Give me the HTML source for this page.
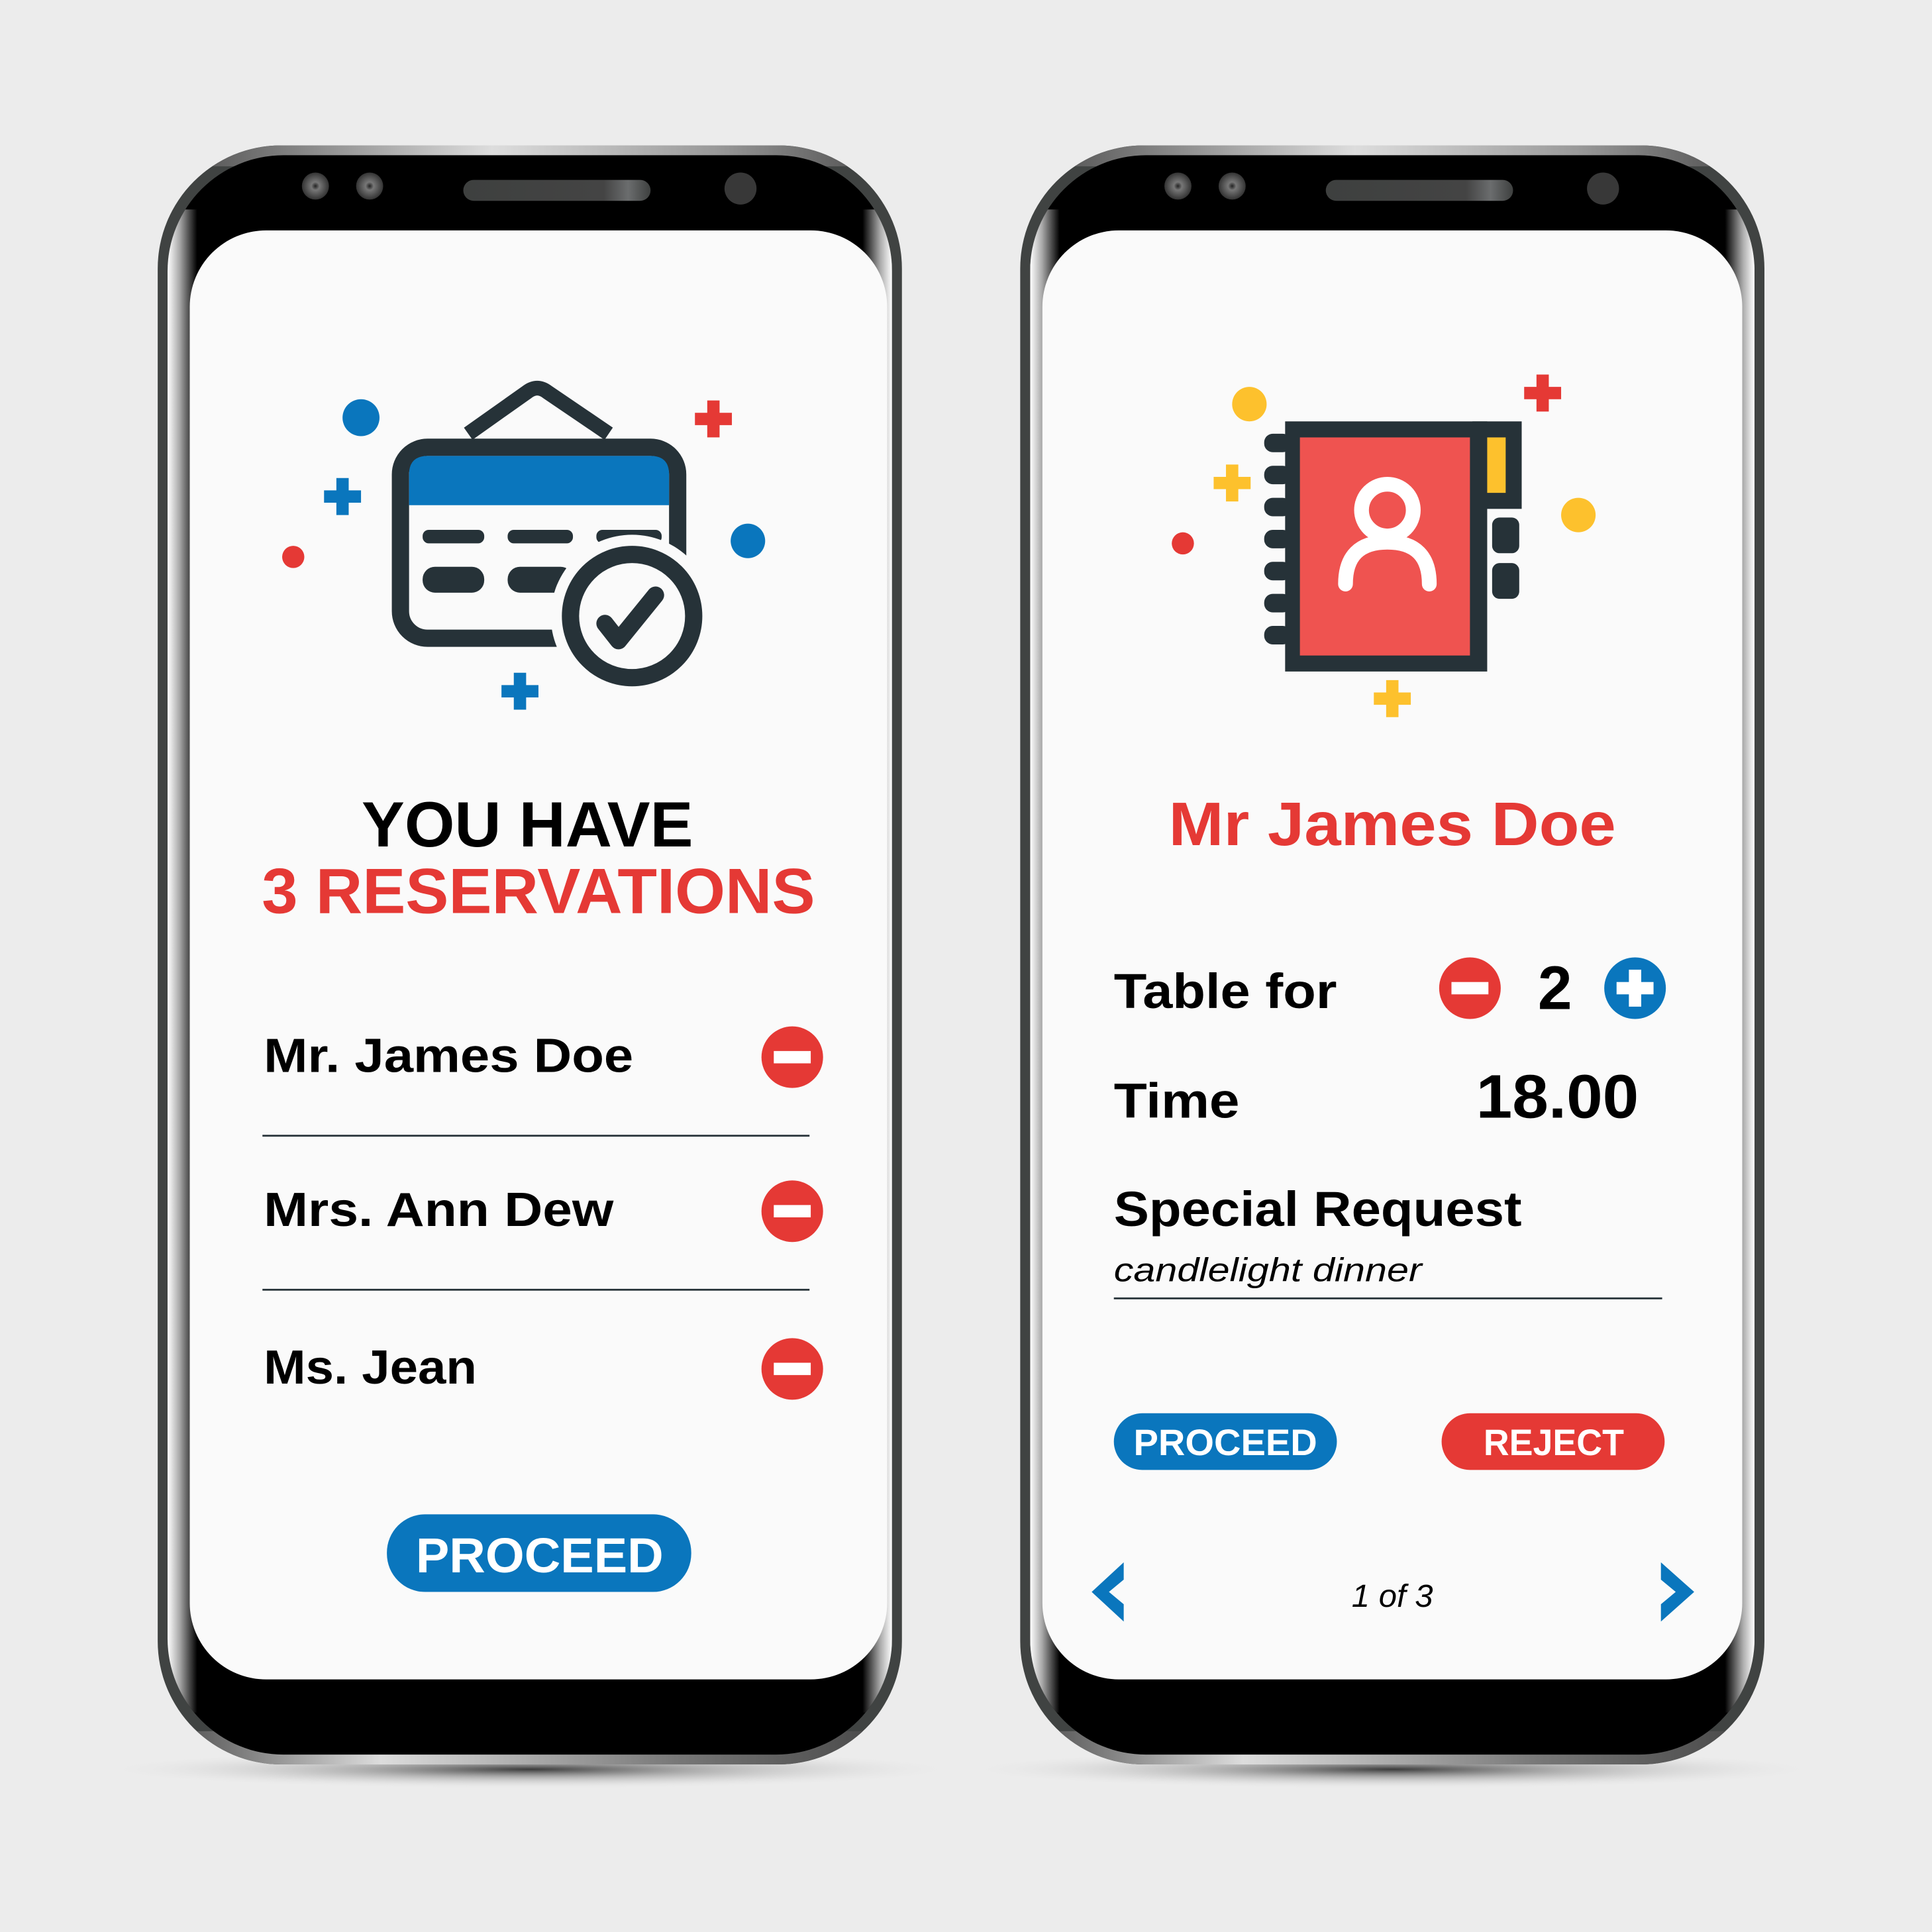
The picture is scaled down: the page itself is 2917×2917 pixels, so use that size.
<!DOCTYPE html>
<html><head><meta charset="utf-8"><style>
html,body{margin:0;padding:0;background:#ececec;}
svg{display:block;}
text{font-family:"Liberation Sans",sans-serif;}
</style></head><body>
<svg width="2917" height="2917" viewBox="0 0 1568 1568" xmlns="http://www.w3.org/2000/svg">
<defs>
<linearGradient id="bottomEdge" x1="0" x2="1" y1="0" y2="0">
<stop offset="0" stop-color="#444"/><stop offset="0.3" stop-color="#ddd"/><stop offset="0.7" stop-color="#777"/><stop offset="1" stop-color="#444"/></linearGradient>
<linearGradient id="topEdge" x1="0" x2="1" y1="0" y2="0">
<stop offset="0" stop-color="#444"/><stop offset="0.45" stop-color="#ddd"/><stop offset="0.75" stop-color="#999"/><stop offset="1" stop-color="#444"/></linearGradient>
<linearGradient id="sideL" x1="0" x2="1"><stop offset="0" stop-color="#fff"/><stop offset="0.4" stop-color="#aaa"/><stop offset="1" stop-color="#000"/></linearGradient>
<linearGradient id="sideR" x1="1" x2="0"><stop offset="0" stop-color="#fff"/><stop offset="0.4" stop-color="#aaa"/><stop offset="1" stop-color="#000"/></linearGradient>
<linearGradient id="spk" x1="0" x2="1"><stop offset="0" stop-color="#3e403f"/><stop offset="0.75" stop-color="#444"/><stop offset="0.88" stop-color="#6b6d6e"/><stop offset="1" stop-color="#3e403f"/></linearGradient>
<radialGradient id="shadow" cx="0.5" cy="0.5" r="0.5"><stop offset="0" stop-color="#000" stop-opacity="0.75"/><stop offset="0.4" stop-color="#777" stop-opacity="0.5"/><stop offset="1" stop-color="#ececec" stop-opacity="0"/></radialGradient>
<radialGradient id="cam" cx="0.5" cy="0.5" r="0.5"><stop offset="0" stop-color="#222"/><stop offset="0.3" stop-color="#777"/><stop offset="1" stop-color="#333"/></radialGradient>
<clipPath id="outerClip"><rect x="128" y="118" width="604" height="1314" rx="100"/></clipPath>
<clipPath id="innerClip"><rect x="136" y="126" width="588" height="1298" rx="94"/></clipPath>
<g id="frame">
<ellipse cx="430" cy="1436" rx="350" ry="16" fill="url(#shadow)"/>
<rect x="128" y="118" width="604" height="1314" rx="100" fill="#404342"/>
<g clip-path="url(#outerClip)">
<rect x="128" y="1405" width="604" height="30" fill="url(#bottomEdge)"/>
<rect x="128" y="115" width="604" height="20" fill="url(#topEdge)"/>
</g>
<rect x="136" y="126" width="588" height="1298" rx="94" fill="#000"/>
<g clip-path="url(#innerClip)">
<rect x="136" y="170" width="24" height="1220" fill="url(#sideL)"/>
<rect x="700" y="170" width="24" height="1220" fill="url(#sideR)"/>
</g>
<circle cx="256" cy="151" r="11" fill="url(#cam)"/>
<circle cx="300" cy="151" r="11" fill="url(#cam)"/>
<rect x="376" y="146" width="152" height="17" rx="8.5" fill="url(#spk)"/>
<circle cx="601" cy="153" r="13" fill="#383838"/>
</g>
</defs>
<rect width="1568" height="1568" fill="#ececec"/>
<use href="#frame"/>
<rect x="154" y="187" width="566" height="1176" rx="62" fill="#fafafa"/>
<use href="#frame" x="700"/>
<rect x="846" y="187" width="568" height="1176" rx="62" fill="#fafafa"/>

<!-- LEFT ICON -->
<g fill="#0a76bd">
<circle cx="293" cy="339" r="15"/><circle cx="607" cy="439" r="14"/>
<path d="M273 388h10v10h10v10h-10v10h-10v-10h-10v-10h10z"/>
<path d="M417 546h10v10h10v10h-10v10h-10v-10h-10v-10h10z"/>
</g>
<circle cx="238" cy="452" r="9" fill="#e53935"/>
<path fill="#e53935" d="M574 325h10v10h10v10h-10v10h-10v-10h-10v-10h10z"/>
<path d="M380 352 L428 318 Q436 312 444 318 L494 352" fill="none" stroke="#263238" stroke-width="12" stroke-linejoin="round"/>
<rect x="325" y="363" width="225" height="155" rx="22" fill="#fafafa" stroke="#263238" stroke-width="14"/>
<path d="M332 410 V385 Q332 370 347 370 H528 Q543 370 543 385 V410 Z" fill="#0a76bd"/>
<g fill="#263238">
<rect x="343" y="430" width="50" height="11" rx="5"/><rect x="412" y="430" width="53" height="11" rx="5"/><rect x="484" y="430" width="53" height="11" rx="5"/>
<rect x="343" y="460" width="50" height="21" rx="10"/><rect x="412" y="460" width="53" height="21" rx="10"/>
</g>
<circle cx="513" cy="500" r="66" fill="#fafafa"/>
<circle cx="513" cy="500" r="50" fill="#fafafa" stroke="#263238" stroke-width="14"/>
<path d="M491 506 L502 520 L532 483" fill="none" stroke="#263238" stroke-width="14" stroke-linecap="round" stroke-linejoin="round"/>

<!-- LEFT TEXT -->
<text x="428" y="687" text-anchor="middle" font-size="52" font-weight="600" fill="#000" textLength="269" lengthAdjust="spacingAndGlyphs">YOU HAVE</text>
<text x="437" y="741" text-anchor="middle" font-size="52" font-weight="bold" fill="#e53935" textLength="449" lengthAdjust="spacingAndGlyphs">3 RESERVATIONS</text>
<text x="214" y="870" font-size="39" font-weight="bold" fill="#000" textLength="300" lengthAdjust="spacingAndGlyphs">Mr. James Doe</text>
<text x="214" y="995" font-size="39" font-weight="bold" fill="#000" textLength="284" lengthAdjust="spacingAndGlyphs">Mrs. Ann Dew</text>
<text x="214" y="1123" font-size="39" font-weight="bold" fill="#000" textLength="173" lengthAdjust="spacingAndGlyphs">Ms. Jean</text>
<rect x="213" y="921" width="444" height="1.5" fill="#263238"/>
<rect x="213" y="1046" width="444" height="1.5" fill="#263238"/>
<g fill="#e53935"><circle cx="643" cy="858" r="25"/><circle cx="643" cy="983" r="25"/><circle cx="643" cy="1111" r="25"/></g>
<g fill="#fff"><rect x="628" y="853" width="30" height="10"/><rect x="628" y="978" width="30" height="10"/><rect x="628" y="1106" width="30" height="10"/></g>
<rect x="314" y="1229" width="247" height="63" rx="31" fill="#0a76bd"/>
<text x="438" y="1276" text-anchor="middle" font-size="40" font-weight="bold" fill="#fff" textLength="201" lengthAdjust="spacingAndGlyphs">PROCEED</text>

<!-- RIGHT ICON -->
<circle cx="1014" cy="328" r="14" fill="#fdc12d"/>
<circle cx="1281" cy="418" r="14" fill="#fdc12d"/>
<circle cx="960" cy="441" r="9" fill="#e53935"/>
<path fill="#e53935" d="M1247 304h10v10h10v10h-10v10h-10v-10h-10v-10h10z"/>
<path fill="#fdc12d" d="M995 377h10v10h10v10h-10v10h-10v-10h-10v-10h10z"/>
<path fill="#fdc12d" d="M1125 552h10v10h10v10h-10v10h-10v-10h-10v-10h10z"/>
<rect x="1043" y="342" width="164" height="203" fill="#263238"/>
<rect x="1195" y="342" width="40" height="71" fill="#263238"/>
<rect x="1207" y="355" width="15" height="45" fill="#fdc12d"/>
<rect x="1055" y="355" width="138" height="177" fill="#ef5350"/>
<g fill="#263238">
<rect x="1211" y="420" width="22" height="29" rx="6"/><rect x="1211" y="457" width="22" height="29" rx="6"/>
<rect x="1026" y="352" width="22" height="15" rx="7"/><rect x="1026" y="378" width="22" height="15" rx="7"/><rect x="1026" y="404" width="22" height="15" rx="7"/><rect x="1026" y="430" width="22" height="15" rx="7"/><rect x="1026" y="456" width="22" height="15" rx="7"/><rect x="1026" y="482" width="22" height="15" rx="7"/><rect x="1026" y="508" width="22" height="15" rx="7"/>
</g>
<circle cx="1126" cy="414" r="21" fill="none" stroke="#fff" stroke-width="12"/>
<path d="M1092 474 Q1092 440 1126 440 Q1160 440 1160 474" fill="none" stroke="#fff" stroke-width="12" stroke-linecap="round"/>

<!-- RIGHT TEXT -->
<text x="1130" y="686" text-anchor="middle" font-size="50" font-weight="bold" fill="#e53935" textLength="363" lengthAdjust="spacingAndGlyphs">Mr James Doe</text>
<text x="904" y="818" font-size="40" font-weight="bold" fill="#000" textLength="181" lengthAdjust="spacingAndGlyphs">Table for</text>
<circle cx="1193" cy="802" r="25" fill="#e53935"/><rect x="1178" y="797" width="30" height="10" fill="#fff"/>
<text x="1262" y="819" text-anchor="middle" font-size="50" font-weight="bold" fill="#000">2</text>
<circle cx="1327" cy="802" r="25" fill="#0a76bd"/><rect x="1312" y="797" width="30" height="10" fill="#fff"/><rect x="1322" y="787" width="10" height="30" fill="#fff"/>
<text x="904" y="907" font-size="40" font-weight="bold" fill="#000" textLength="102" lengthAdjust="spacingAndGlyphs">Time</text>
<text x="1198" y="907" font-size="50" font-weight="bold" fill="#000" textLength="132" lengthAdjust="spacingAndGlyphs">18.00</text>
<text x="904" y="995" font-size="40" font-weight="bold" fill="#000" textLength="331" lengthAdjust="spacingAndGlyphs">Special Request</text>
<text x="904" y="1040" font-size="27" font-style="italic" fill="#000" textLength="250" lengthAdjust="spacingAndGlyphs">candlelight dinner</text>
<rect x="904" y="1053" width="445" height="1.5" fill="#263238"/>
<rect x="904" y="1147" width="181" height="46" rx="23" fill="#0a76bd"/>
<text x="994.5" y="1181" text-anchor="middle" font-size="30" font-weight="bold" fill="#fff" textLength="149" lengthAdjust="spacingAndGlyphs">PROCEED</text>
<rect x="1170" y="1147" width="181" height="46" rx="23" fill="#e53935"/>
<text x="1261" y="1181" text-anchor="middle" font-size="30" font-weight="bold" fill="#fff" textLength="114" lengthAdjust="spacingAndGlyphs">REJECT</text>
<path d="M912 1268 L886 1292 L912 1316 V1302 L900 1292 L912 1282 Z" fill="#0a76bd"/>
<path d="M1348 1268 L1375 1292 L1348 1316 V1302 L1360 1292 L1348 1282 Z" fill="#0a76bd"/>
<text x="1130" y="1304" text-anchor="middle" font-size="26" font-style="italic" fill="#000" textLength="66" lengthAdjust="spacingAndGlyphs">1 of 3</text>
</svg>
</body></html>
